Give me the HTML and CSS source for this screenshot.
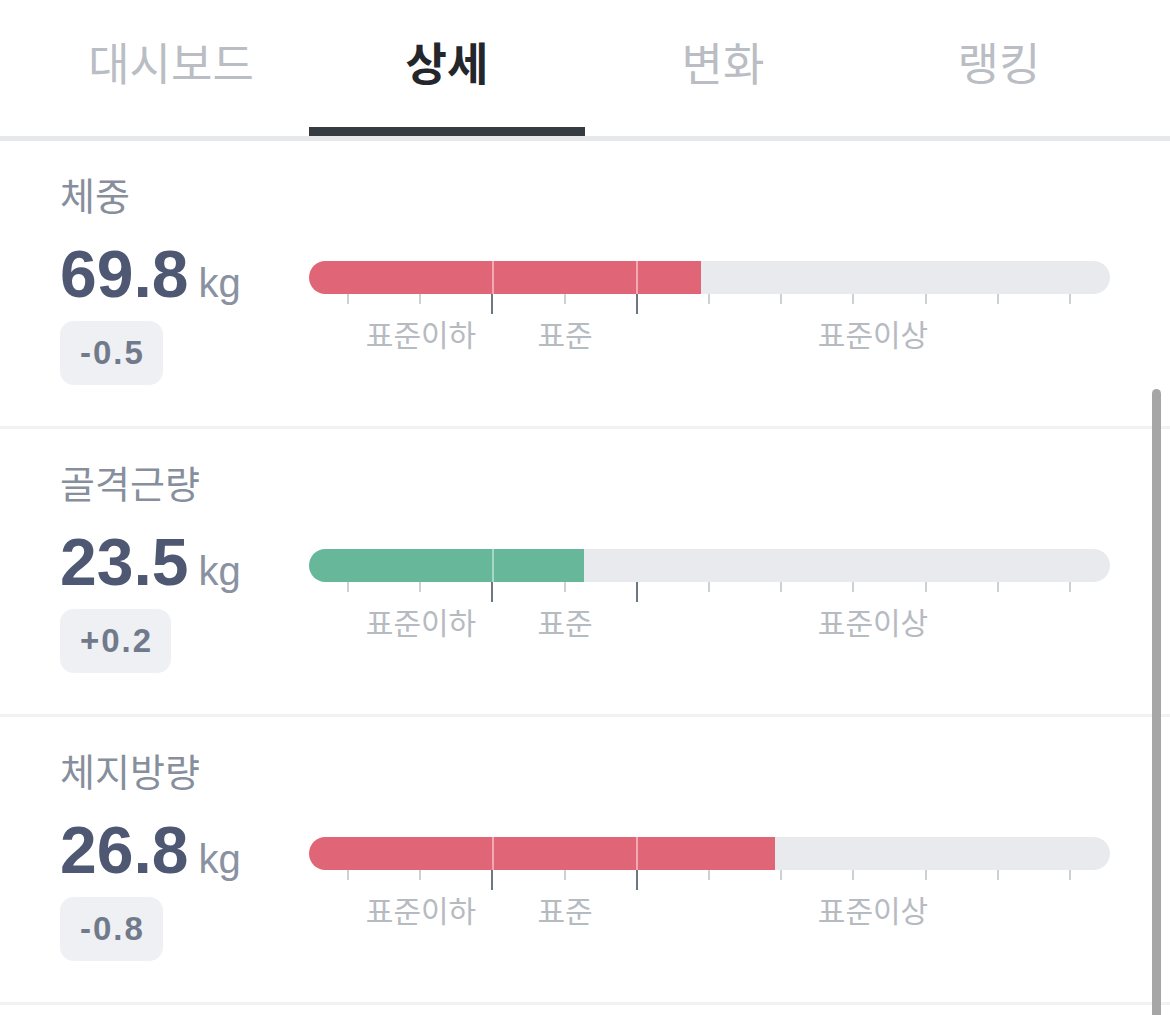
FILE: index.html
```html
<!DOCTYPE html>
<html lang="ko">
<head>
<meta charset="utf-8">
<link rel="stylesheet" href="styles.css">
</head>
<body>
<nav class="tabs">
  <div class="tab">대시보드</div>
  <div class="tab active">상세</div>
  <div class="tab">변화</div>
  <div class="tab">랭킹</div>
</nav>
<main class="list">
  <section class="metric">
    <div class="left">
      <div class="label">체중</div>
      <div class="value"><span class="num">69.8</span><span class="unit">kg</span></div>
      <div class="badge">-0.5</div>
    </div>
    <div class="right">
      <div class="bar">
        <div class="fill red" style="width:392px"><i class="div d1"></i><i class="div d2"></i></div>
      </div>
      <div class="ticks"><i></i><i></i><i class="major"></i><i></i><i class="major"></i><i></i><i></i><i></i><i></i><i></i><i></i></div>
      <div class="scale"><span class="s1">표준이하</span><span class="s2">표준</span><span class="s3">표준이상</span></div>
    </div>
  </section>
  <section class="metric">
    <div class="left">
      <div class="label">골격근량</div>
      <div class="value"><span class="num">23.5</span><span class="unit">kg</span></div>
      <div class="badge">+0.2</div>
    </div>
    <div class="right">
      <div class="bar">
        <div class="fill green" style="width:275px"><i class="div d1"></i><i class="div d2"></i></div>
      </div>
      <div class="ticks"><i></i><i></i><i class="major"></i><i></i><i class="major"></i><i></i><i></i><i></i><i></i><i></i><i></i></div>
      <div class="scale"><span class="s1">표준이하</span><span class="s2">표준</span><span class="s3">표준이상</span></div>
    </div>
  </section>
  <section class="metric">
    <div class="left">
      <div class="label">체지방량</div>
      <div class="value"><span class="num">26.8</span><span class="unit">kg</span></div>
      <div class="badge">-0.8</div>
    </div>
    <div class="right">
      <div class="bar">
        <div class="fill red" style="width:466px"><i class="div d1"></i><i class="div d2"></i></div>
      </div>
      <div class="ticks"><i></i><i></i><i class="major"></i><i></i><i class="major"></i><i></i><i></i><i></i><i></i><i></i><i></i></div>
      <div class="scale"><span class="s1">표준이하</span><span class="s2">표준</span><span class="s3">표준이상</span></div>
    </div>
  </section>
  <section class="metric stub"></section>
</main>
<div class="scrollbar"></div>
</body>
</html>
```

FILE: styles.css
```css
html, body {
  margin: 0;
  padding: 0;
  background: #ffffff;
  overflow: hidden;
}
body {
  font-family: "Noto Sans CJK KR", "Noto Sans", sans-serif;
  width: 1170px;
  height: 1015px;
  position: relative;
}
.tabs {
  display: flex;
  padding: 0 33px;
  border-bottom: 5px solid #e7e8eb;
}
.tab {
  flex: 1;
  box-sizing: border-box;
  height: 136px;
  padding-top: 37px;
  text-align: center;
  font-size: 45px;
  line-height: 50px;
  color: #babdc3;
  border-bottom: 9px solid transparent;
}
.tab.active {
  color: #23272c;
  font-weight: 700;
  border-bottom-color: #363b42;
}
.metric {
  display: flex;
  padding: 33px 0 41px 60px;
  border-bottom: 3px solid #f1f2f4;
}
.metric.stub {
  height: 40px;
  border-bottom: none;
}
.left {
  width: 249px;
}
.label {
  font-size: 38px;
  line-height: 40px;
  color: #878f9d;
  margin-bottom: 28px;
}
.value {
  line-height: 64px;
  height: 64px;
  white-space: nowrap;
}
.num {
  font-family: "Liberation Sans", Arial, sans-serif;
  font-weight: 700;
  font-size: 66px;
  color: #4f5872;
}
.unit {
  font-family: "Liberation Sans", Arial, sans-serif;
  font-size: 40px;
  color: #8a92a2;
  margin-left: 10px;
}
.badge {
  display: inline-block;
  margin-top: 15px;
  height: 64px;
  line-height: 64px;
  padding: 0 18px 0 20px;
  border-radius: 14px;
  background: #eef0f3;
  font-family: "Liberation Sans", Arial, sans-serif;
  font-weight: 700;
  font-size: 33px;
  letter-spacing: 2px;
  color: #717a8b;
}
.right {
  width: 801px;
  margin-top: 87px;
}
.bar {
  position: relative;
  height: 33px;
  border-radius: 17px;
  background: #e9eaee;
  overflow: hidden;
}
.fill {
  position: relative;
  height: 100%;
  overflow: hidden;
}
.fill.red { background: #e06577; }
.fill.green { background: #67b89a; }
.fill .div {
  position: absolute;
  top: 0;
  bottom: 0;
  width: 2px;
}
.fill.red .div { background: #f3a9b3; }
.fill.green .div { background: #a7d8c6; }
.fill .d1 { left: 183px; }
.fill .d2 { left: 327px; }
.ticks {
  display: flex;
  justify-content: space-between;
  align-items: flex-start;
  height: 22px;
  padding: 0 39px 0 38px;
}
.ticks i {
  display: block;
  width: 2px;
  height: 10px;
  background: #cdd0d5;
}
.ticks i.major {
  height: 20px;
  background: #6f7684;
}
.scale {
  display: flex;
  font-size: 30px;
  line-height: 34px;
  color: #b6bac1;
  white-space: nowrap;
}
.scale span {
  text-align: center;
}
.scale .s1 { margin-left: 40px; width: 144px; }
.scale .s2 { width: 144px; }
.scale .s3 { width: 472px; }
.scrollbar {
  position: absolute;
  left: 1152px;
  top: 389px;
  width: 9px;
  height: 640px;
  border-radius: 5px;
  background: #a6a6a6;
}
```
